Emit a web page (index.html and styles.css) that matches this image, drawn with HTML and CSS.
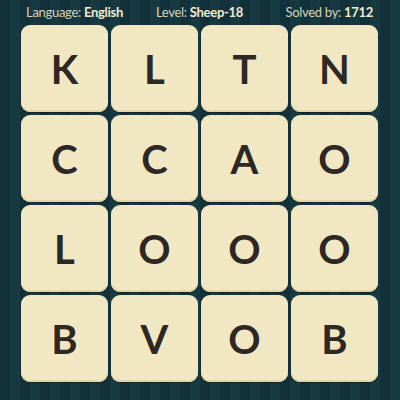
FILE: index.html
```html
<!DOCTYPE html>
<html>
<head>
<meta charset="utf-8">
<link rel="stylesheet" href="styles.css">
</head>
<body>
<div class="page">
  <div class="header">
    <div class="info left"><span class="label">Language:</span> <span class="value">English</span></div>
    <div class="info mid"><span class="label">Level:</span> <span class="value">Sheep-18</span></div>
    <div class="info right"><span class="label">Solved by:</span> <span class="value">1712</span></div>
  </div>
  <div class="board">
    <div class="tile">K</div><div class="tile">L</div><div class="tile">T</div><div class="tile">N</div>
    <div class="tile">C</div><div class="tile">C</div><div class="tile">A</div><div class="tile">O</div>
    <div class="tile">L</div><div class="tile">O</div><div class="tile">O</div><div class="tile">O</div>
    <div class="tile">B</div><div class="tile">V</div><div class="tile">O</div><div class="tile">B</div>
  </div>
</div>
</body>
</html>
```
FILE: styles.css
```css
html, body {
  margin: 0;
  padding: 0;
}
body {
  width: 400px;
  height: 400px;
  overflow: hidden;
  background: repeating-linear-gradient(90deg, #12313a 0px, #12313a 10px, #173a42 10px, #173a42 20px);
  font-family: Lato, "Open Sans", sans-serif;
}
.page {
  width: 400px;
  height: 400px;
}
.header {
  height: 25px;
  display: grid;
  grid-template-columns: 1fr 1fr 1fr;
  align-items: center;
  padding: 0 27px 0 26px;
  font-size: 13px;
  letter-spacing: -0.3px;
  line-height: 25px;
}
.info { white-space: nowrap; }
.left { justify-self: start; }
.mid { justify-self: center; }
.right { justify-self: end; }
.label {
  color: #d8d2b6;
  font-weight: 400;
}
.value {
  color: #f2ebcf;
  font-weight: 700;
}
.board {
  display: grid;
  grid-template-columns: repeat(4, 87px);
  grid-auto-rows: 87px;
  gap: 3px;
  padding-left: 21px;
}
.tile {
  background: #f1e8c3;
  border-radius: 9px;
  box-shadow: inset 0 -2px 0 #e2d7ac, 0 1px 1px rgba(0,0,0,0.35);
  display: flex;
  align-items: center;
  justify-content: center;
  color: #2d2823;
  font-family: Lato, "Open Sans", sans-serif;
  font-weight: 700;
  font-size: 40px;
}
```
